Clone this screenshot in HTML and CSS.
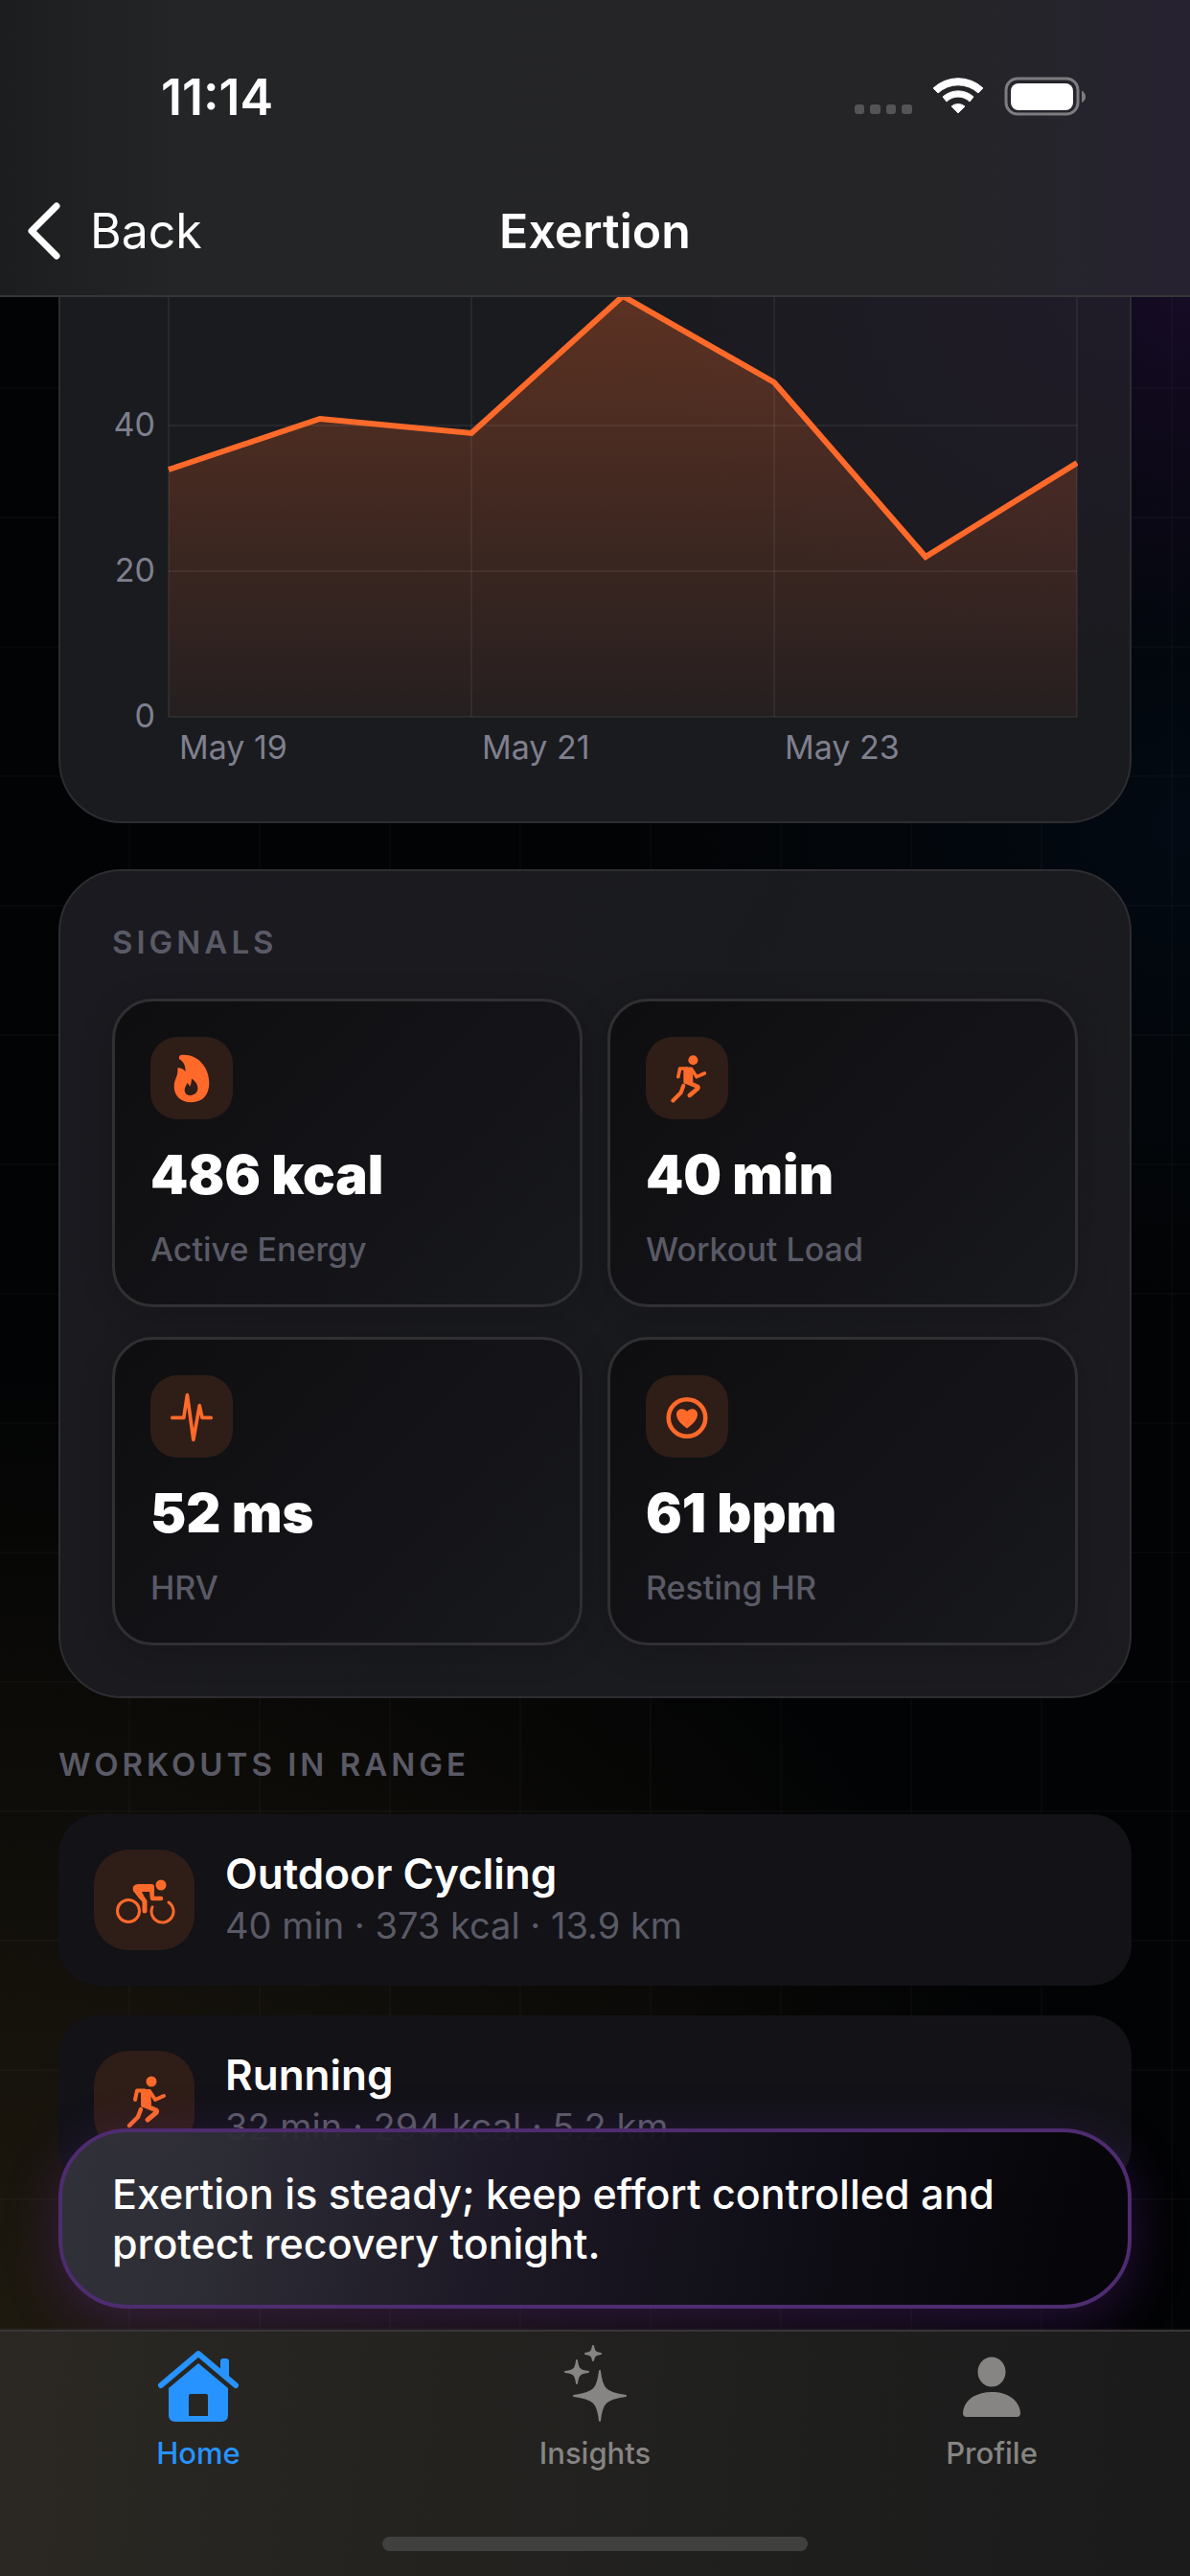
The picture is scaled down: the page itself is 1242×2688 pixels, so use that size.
FILE: index.html
```html
<!DOCTYPE html>
<html lang="en">
<head>
  <meta charset="UTF-8">
  <meta name="viewport" content="width=device-width, initial-scale=1.0">
  <title>Exertion</title>
  <link rel="stylesheet" href="styles.css">
</head>
<body>
  <!-- shared icons -->
  <svg class="sprite" aria-hidden="true">
    <symbol id="icon-run" viewBox="0 0 48 60">
      <circle cx="31" cy="9" r="5.5" fill="currentColor"/>
      <path d="M22 19 L28 19 L29 33 L22 34 Z" fill="currentColor" stroke="currentColor" stroke-width="4" stroke-linejoin="round"/>
      <g fill="none" stroke="currentColor" stroke-width="4" stroke-linecap="round" stroke-linejoin="round">
        <path d="M24 18.500 H16 L14 28"/>
        <path d="M29 19 L35 28 L44 24"/>
        <path d="M24 34 L36 39 Q37 40 36 41.500 L27 49" stroke-width="5"/>
        <path d="M20 38 L17 46 L8 55" stroke-width="4.500"/>
      </g>
    </symbol>
  </svg>

  <div class="app">
    <header class="top-bar">
      <div class="status-bar">
        <span class="time">11:14</span>
        <svg class="status-icons" viewBox="0 0 246 42" aria-hidden="true">
          <g fill="#545456">
            <rect x="0" y="29" width="10" height="10" rx="3"/>
            <rect x="16" y="29" width="11" height="10" rx="3"/>
            <rect x="33" y="29" width="10" height="10" rx="3"/>
            <rect x="49" y="29" width="11" height="10" rx="3"/>
          </g>
          <path d="M82 12 A38 38 0 0 1 134 12 L129 17 A31 31 0 0 0 87 17 Z" fill="#fff" stroke="#fff" stroke-linejoin="round"/>
          <path d="M92 21 A24 24 0 0 1 124 21 L120 26 A17 17 0 0 0 96 26 Z" fill="#fff" stroke="#fff" stroke-linejoin="round"/>
          <path d="M101 31 A11 11 0 0 1 115 31 L108 38 Z" fill="#fff" stroke="#fff" stroke-linejoin="round"/>
          <rect x="158" y="2" width="75" height="37" rx="12" fill="none" stroke="#7d7c80" stroke-width="3"/>
          <rect x="163" y="7" width="65" height="28" rx="8" fill="#fff"/>
          <path d="M237 14.500 Q241 17 241 21 Q241 25 237 27 Z" fill="#7d7c80"/>
        </svg>
      </div>
      <div class="nav-bar">
        <button class="back-button" type="button">
          <svg viewBox="0 0 36 60" aria-hidden="true"><path d="M31 4 L5 30 L31 56" fill="none" stroke="#fff" stroke-width="7" stroke-linecap="round" stroke-linejoin="round"/></svg>
          Back
        </button>
        <h1>Exertion</h1>
      </div>
    </header>

    <main class="content">
      <section class="card chart-card">
        <svg class="chart" viewBox="0 0 1008 490" role="img" aria-label="Exertion by day">
          <defs>
            <linearGradient id="area" x1="0" y1="0" x2="0" y2="1">
              <stop offset="0" stop-color="#ff6a2a" stop-opacity=".29"/>
              <stop offset="1" stop-color="#ff6a2a" stop-opacity=".05"/>
            </linearGradient>
          </defs>
          <path d="M59 180 L217 127 L375 142 L533 -2 L691 89 L849 271 L1007 173 V438 H59 Z" fill="url(#area)"/>
          <g stroke="#fff" stroke-opacity=".06" stroke-width="2">
            <path d="M59 134 H1007 M59 286 H1007 M59 438 H1007"/>
            <path d="M59 0 V438 M375 0 V438 M691 0 V438 M1007 0 V438"/>
          </g>
          <path d="M59 180 L217 127 L375 142 L533 -1 L691 89 L849 271 L1007 173" fill="none" stroke="#ff6a2a" stroke-width="6"/>
          <g class="axis" text-anchor="end">
            <text x="45" y="145">40</text>
            <text x="45" y="297">20</text>
            <text x="45" y="449">0</text>
          </g>
          <g class="axis">
            <text x="70" y="482">May 19</text>
            <text x="386" y="482">May 21</text>
            <text x="702" y="482">May 23</text>
          </g>
        </svg>
      </section>

      <section class="card signals">
        <h2>SIGNALS</h2>
        <div class="signal-grid">
          <article class="tile">
            <span class="tile-icon">
              <svg viewBox="0 0 48 60" aria-hidden="true">
                <path fill-rule="evenodd" fill="currentColor" d="M14 3 C30 2 44 16 44 35 C44 49 36 57 24 57 C11 57 4 49 4 39 C4 30 9 28 8 18 C12 17 15 20 17 22 C17 15 15 11 10 8 C9 5 10 3 14 3 Z M24 30 C24 34 23 37 22 39 C21 37 20 36 19 35 C18 38 16 40 16 43 C16 47 19 49 23 49 C27 49 31 46 31 41 C31 36 27 32 24 30 Z"/>
              </svg>
            </span>
            <strong>486 kcal</strong>
            <p>Active Energy</p>
          </article>
          <article class="tile">
            <span class="tile-icon"><svg aria-hidden="true"><use href="#icon-run"/></svg></span>
            <strong>40 min</strong>
            <p>Workout Load</p>
          </article>
          <article class="tile">
            <span class="tile-icon">
              <svg viewBox="0 0 48 60" aria-hidden="true">
                <path d="M2 31 H15 L19 5 L26 56 L33 17 L36 31 H46" fill="none" stroke="currentColor" stroke-width="4" stroke-linecap="round" stroke-linejoin="round"/>
              </svg>
            </span>
            <strong>52 ms</strong>
            <p>HRV</p>
          </article>
          <article class="tile">
            <span class="tile-icon">
              <svg viewBox="0 0 48 60" aria-hidden="true">
                <circle cx="24" cy="31" r="21" fill="none" stroke="currentColor" stroke-width="5"/>
                <path d="M24 43 C17 38 12 33 12 27 C12 20 21 19 24 24 C27 19 36 20 36 27 C36 33 31 38 24 43 Z" fill="currentColor"/>
              </svg>
            </span>
            <strong>61 bpm</strong>
            <p>Resting HR</p>
          </article>
        </div>
      </section>

      <section class="workouts">
        <h2>WORKOUTS IN RANGE</h2>
        <ul class="workout-list">
          <li class="workout">
            <span class="workout-icon">
              <svg viewBox="0 0 64 60" aria-hidden="true">
                <g fill="none" stroke="currentColor" stroke-linecap="round" stroke-linejoin="round">
                  <circle cx="15" cy="41" r="11.500" stroke-width="3"/>
                  <path d="M40 37 A11.500 11.500 0 1 0 57 32" stroke-width="3"/>
                  <path d="M32 41 V31 L23 19" stroke-width="5"/>
                  <path d="M39 16 L40 28 H49" stroke-width="4.500"/>
                </g>
                <path d="M25 13 H39 Q42 13 42 16 V24 L37 21 H29 L32 27 L27 29 L20 20 Q18 14 25 13 Z" fill="currentColor"/>
                <circle cx="49" cy="14" r="5.500" fill="currentColor"/>
              </svg>
            </span>
            <div>
              <h3>Outdoor Cycling</h3>
              <p>40 min · 373 kcal · 13.9 km</p>
            </div>
          </li>
          <li class="workout">
            <span class="workout-icon"><svg aria-hidden="true"><use href="#icon-run"/></svg></span>
            <div>
              <h3>Running</h3>
              <p>32 min · 294 kcal · 5.2 km</p>
            </div>
          </li>
        </ul>
      </section>

      <p class="toast">Exertion is steady; keep effort controlled and protect recovery tonight.</p>
    </main>

    <footer class="tab-bar">
      <nav class="tabs">
        <a class="tab active" href="#home">
          <svg viewBox="0 0 90 84" aria-hidden="true">
            <path d="M6 40 L45 7 L84 40" fill="none" stroke="currentColor" stroke-width="6" stroke-linecap="round" stroke-linejoin="round"/>
            <path d="M68 27 V15 Q68 12 71 12 H74 Q77 12 77 15 V35 Z" fill="currentColor"/>
            <path fill-rule="evenodd" d="M45 17 L76 43 V71 Q76 78 69 78 H21 Q14 78 14 71 V43 Z M37 49 Q35 49 35 51 V72 H55 V51 Q55 49 53 49 Z" fill="currentColor"/>
          </svg>
          Home
        </a>
        <a class="tab" href="#insights">
          <svg viewBox="0 0 90 84" aria-hidden="true">
            <g fill="currentColor" stroke="currentColor" stroke-width="2" stroke-linejoin="round">
              <path d="M50 25 C52 43 55 48 77 51 C55 54 52 59 50 77 C48 59 45 54 23 51 C45 48 48 43 50 25 Z"/>
              <path d="M26 14 C27 23 29 25 38 26 C29 27 27 29 26 38 C25 29 23 27 14 26 C23 25 25 23 26 14 Z"/>
              <path d="M43 -1 C44 5 45 6 51 7 C45 8 44 9 43 14 C42 9 41 8 35 7 C41 6 42 5 43 -1 Z"/>
            </g>
          </svg>
          Insights
        </a>
        <a class="tab" href="#profile">
          <svg viewBox="0 0 90 84" aria-hidden="true">
            <ellipse cx="45" cy="26" rx="14.500" ry="15.500" fill="currentColor"/>
            <path d="M15 69 C16 55 29 47 45 47 C61 47 74 55 75 69 Q75 73 71 73 H19 Q15 73 15 69 Z" fill="currentColor"/>
          </svg>
          Profile
        </a>
      </nav>
      <div class="home-indicator"></div>
    </footer>
  </div>
</body>
</html>
```
FILE: styles.css
```css
* {
  margin: 0;
  padding: 0;
  box-sizing: border-box;
}
body {
  background: #020304;
  color: #fff;
  font-family: Inter, 'Liberation Sans', sans-serif;
}
button {
  background: none;
  border: none;
  color: inherit;
  font: inherit;
}
.sprite {
  position: absolute;
  width: 0;
  height: 0;
}
.app {
  display: flex;
  flex-direction: column;
  height: 100vh;
  overflow: hidden;
}

/* top bar */
.top-bar {
  background: linear-gradient(90deg, #1c1d1e 0%, #242526 15%, #252528 80%, #262230 100%);
  border-bottom: 2px solid #363638;
}
.status-bar {
  display: flex;
  justify-content: space-between;
  align-items: center;
  height: 170px;
  padding: 32px 104px 0 168px;
}
.time {
  font-size: 52px;
  font-weight: 600;
}
.status-icons {
  width: 246px;
  height: 42px;
}
.nav-bar {
  display: grid;
  grid-template-columns: 1fr auto 1fr;
  align-items: center;
  height: 138px;
  padding: 4px 28px 0;
}
.back-button {
  display: flex;
  align-items: center;
  gap: 30px;
  font-size: 50px;
}
.back-button svg {
  width: 36px;
  height: 60px;
}
.nav-bar h1 {
  font-size: 50px;
  font-weight: 600;
}

/* scrolling content */
.content {
  position: relative;
  flex: 1;
  min-height: 0;
  overflow: hidden;
  padding: 0 61px;
  background:
    linear-gradient(90deg, transparent 134px, rgba(255, 255, 255, 0.02) 134px) 0 0 / 136px 136px,
    linear-gradient(transparent 94px, rgba(255, 255, 255, 0.02) 94px, rgba(255, 255, 255, 0.02) 96px, transparent 96px) 0 0 / 136px 135px,
    radial-gradient(400px 380px at 100% 0, #160c26, transparent),
    radial-gradient(600px 500px at 100% 26%, #030a13, transparent),
    radial-gradient(1100px 1000px at 0 100%, #1e190f, transparent),
    #020304;
}
.card {
  border: 2px solid #2d2d31;
  border-radius: 66px;
  background: linear-gradient(115deg, #1b1a20 0%, #191a1e 50%, #1b1b20 100%);
}
.chart-card {
  border-top: none;
  border-radius: 0 0 66px 66px;
  padding: 0 54px 57px;
  background: radial-gradient(500px 400px at 100% 0, #201b28, transparent), #1a1b1f;
}
.chart {
  display: block;
  width: 100%;
}
.axis {
  fill: #7f808e;
  font-size: 34px;
}
h2 {
  color: #5a5a66;
  font-size: 33px;
  font-weight: 600;
  line-height: 40px;
  letter-spacing: 4px;
}
.signals {
  margin-top: 48px;
  padding: 54px 54px 53px;
}
.signal-grid {
  display: grid;
  grid-template-columns: 1fr 1fr;
  gap: 31px 26px;
  margin-top: 39px;
}
.tile {
  padding: 37px;
  border: 3px solid #303033;
  border-radius: 42px;
  background: linear-gradient(135deg, #0e0e10, #131317 50%, #18191c);
  box-shadow: 0 6px 36px rgba(0, 0, 0, 0.15);
}
.tile-icon, .workout-icon {
  display: flex;
  align-items: center;
  justify-content: center;
  background: #2f1d17;
  color: #ff6a2a;
}
.tile-icon {
  width: 86px;
  height: 86px;
  border-radius: 28px;
}
.tile-icon svg {
  width: 44px;
  height: 55px;
}
.tile strong {
  display: block;
  margin-top: 24px;
  font-size: 56px;
  font-weight: 900;
  line-height: 68px;
}
.tile p {
  margin-top: 24px;
  color: #5a5a66;
  font-size: 34px;
  font-weight: 500;
  line-height: 40px;
}

/* workouts */
.workouts {
  margin-top: 49px;
}
.workout-list {
  display: flex;
  flex-direction: column;
  gap: 31px;
  margin-top: 32px;
  list-style: none;
}
.workout {
  display: flex;
  align-items: center;
  gap: 32px;
  padding: 35px 37px;
  border-radius: 42px;
  background: #121217;
}
.workout-icon {
  flex: none;
  width: 105px;
  height: 105px;
  border-radius: 36px;
}
.workout-icon svg {
  width: 64px;
  height: 60px;
}
.workout h3 {
  font-size: 44px;
  font-weight: 600;
  line-height: 54px;
}
.workout p {
  color: #5a5a66;
  font-size: 38px;
  line-height: 55px;
}
.toast {
  position: absolute;
  left: 61px;
  right: 61px;
  bottom: 22px;
  padding: 38px 52px;
  border: 4px solid #4e2c70;
  border-radius: 72px;
  background: linear-gradient(100deg, rgba(50, 50, 58, 0.96) 0%, rgba(46, 46, 55, 0.95) 15%, rgba(30, 26, 40, 0.95) 40%, rgba(17, 15, 24, 0.96) 65%, rgba(6, 5, 9, 0.98) 95%);
  box-shadow: 0 14px 56px rgba(120, 50, 180, 0.3);
  font-size: 43px;
  font-weight: 500;
  line-height: 52px;
}

/* bottom tabs */
.tab-bar {
  height: 257px;
  border-top: 2px solid #3a3538;
  background: linear-gradient(95deg, #2b2823 0%, #242320 35%, #1e1e1d 70%, #1b1b1c 100%);
}
.tabs {
  display: flex;
  justify-content: space-around;
  padding-top: 16px;
}
.tab {
  display: flex;
  flex-direction: column;
  align-items: center;
  flex: 1;
  gap: 9px;
  color: #868583;
  font-size: 31px;
  font-weight: 500;
  line-height: 36px;
  text-decoration: none;
}
.tab svg {
  width: 90px;
  height: 84px;
  overflow: visible;
}
.tab.active {
  color: #2793ff;
}
.home-indicator {
  width: 444px;
  height: 15px;
  margin: 69px auto 0;
  border-radius: 8px;
  background: #40403f;
}
```
